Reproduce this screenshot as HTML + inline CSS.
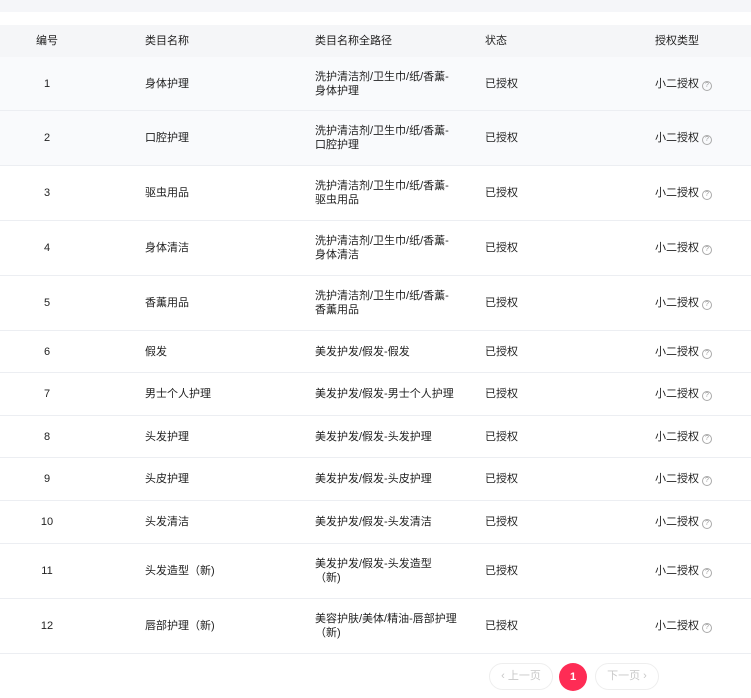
<!DOCTYPE html>
<html><head><meta charset="utf-8"><style>
body{margin:0;width:751px;height:698px;background:#fff;font-family:"Liberation Sans","Noto Sans CJK SC",sans-serif;font-size:11px;color:#222;position:relative;overflow:hidden}
.top{position:absolute;left:0;top:0;width:751px;height:12px;background:#f5f6f9}
.row{position:absolute;left:0;width:751px;border-bottom:1px solid #eceef2;box-sizing:border-box}
.row div{position:absolute;top:50%;transform:translateY(-50%);line-height:14px;white-space:nowrap}
.c1{left:27px;width:40px;text-align:center}.c2{left:145px}.c3{left:315px}.c4{left:485px}.c5{left:655px}
.hd{background:#f5f6f8;border:none}
.q{display:inline-block;width:8px;height:8px;border:1px solid #aaa;border-radius:50%;font-size:7px;line-height:8px;text-align:center;color:#999;margin-left:3px;vertical-align:0px}
.btn{position:absolute;top:663px;height:27px;border:1px solid #eee;border-radius:14px;box-sizing:border-box;color:#c8c8c8;line-height:25px;text-align:center;font-size:11px}
</style></head><body>
<div class="top"></div>
<div class="row hd" style="top:25px;height:32px"><div class="c1">编号</div><div class="c2">类目名称</div><div class="c3">类目名称全路径</div><div class="c4">状态</div><div class="c5">授权类型</div></div>
<div class="row" style="top:57px;height:54px;background:#f9fafc"><div class="c1">1</div><div class="c2">身体护理</div><div class="c3">洗护清洁剂/卫生巾/纸/香薰-<br>身体护理</div><div class="c4">已授权</div><div class="c5">小二授权<span class="q">?</span></div></div>
<div class="row" style="top:111px;height:55px;background:#f9fafc"><div class="c1">2</div><div class="c2">口腔护理</div><div class="c3">洗护清洁剂/卫生巾/纸/香薰-<br>口腔护理</div><div class="c4">已授权</div><div class="c5">小二授权<span class="q">?</span></div></div>
<div class="row" style="top:166px;height:55px"><div class="c1">3</div><div class="c2">驱虫用品</div><div class="c3">洗护清洁剂/卫生巾/纸/香薰-<br>驱虫用品</div><div class="c4">已授权</div><div class="c5">小二授权<span class="q">?</span></div></div>
<div class="row" style="top:221px;height:55px"><div class="c1">4</div><div class="c2">身体清洁</div><div class="c3">洗护清洁剂/卫生巾/纸/香薰-<br>身体清洁</div><div class="c4">已授权</div><div class="c5">小二授权<span class="q">?</span></div></div>
<div class="row" style="top:276px;height:55px"><div class="c1">5</div><div class="c2">香薰用品</div><div class="c3">洗护清洁剂/卫生巾/纸/香薰-<br>香薰用品</div><div class="c4">已授权</div><div class="c5">小二授权<span class="q">?</span></div></div>
<div class="row" style="top:331px;height:42px"><div class="c1">6</div><div class="c2">假发</div><div class="c3">美发护发/假发-假发</div><div class="c4">已授权</div><div class="c5">小二授权<span class="q">?</span></div></div>
<div class="row" style="top:373px;height:43px"><div class="c1">7</div><div class="c2">男士个人护理</div><div class="c3">美发护发/假发-男士个人护理</div><div class="c4">已授权</div><div class="c5">小二授权<span class="q">?</span></div></div>
<div class="row" style="top:416px;height:42px"><div class="c1">8</div><div class="c2">头发护理</div><div class="c3">美发护发/假发-头发护理</div><div class="c4">已授权</div><div class="c5">小二授权<span class="q">?</span></div></div>
<div class="row" style="top:458px;height:43px"><div class="c1">9</div><div class="c2">头皮护理</div><div class="c3">美发护发/假发-头皮护理</div><div class="c4">已授权</div><div class="c5">小二授权<span class="q">?</span></div></div>
<div class="row" style="top:501px;height:43px"><div class="c1">10</div><div class="c2">头发清洁</div><div class="c3">美发护发/假发-头发清洁</div><div class="c4">已授权</div><div class="c5">小二授权<span class="q">?</span></div></div>
<div class="row" style="top:544px;height:55px"><div class="c1">11</div><div class="c2">头发造型（新)</div><div class="c3">美发护发/假发-头发造型<br>（新)</div><div class="c4">已授权</div><div class="c5">小二授权<span class="q">?</span></div></div>
<div class="row" style="top:599px;height:55px"><div class="c1">12</div><div class="c2">唇部护理（新)</div><div class="c3">美容护肤/美体/精油-唇部护理<br>（新)</div><div class="c4">已授权</div><div class="c5">小二授权<span class="q">?</span></div></div>
<div class="btn" style="left:489px;width:64px">‹ 上一页</div>
<div style="position:absolute;left:559px;top:663px;width:28px;height:28px;border-radius:50%;background:#fe2c55;color:#fff;text-align:center;line-height:28px;font-size:11px;font-weight:bold">1</div>
<div class="btn" style="left:595px;width:64px">下一页 ›</div>
</body></html>
